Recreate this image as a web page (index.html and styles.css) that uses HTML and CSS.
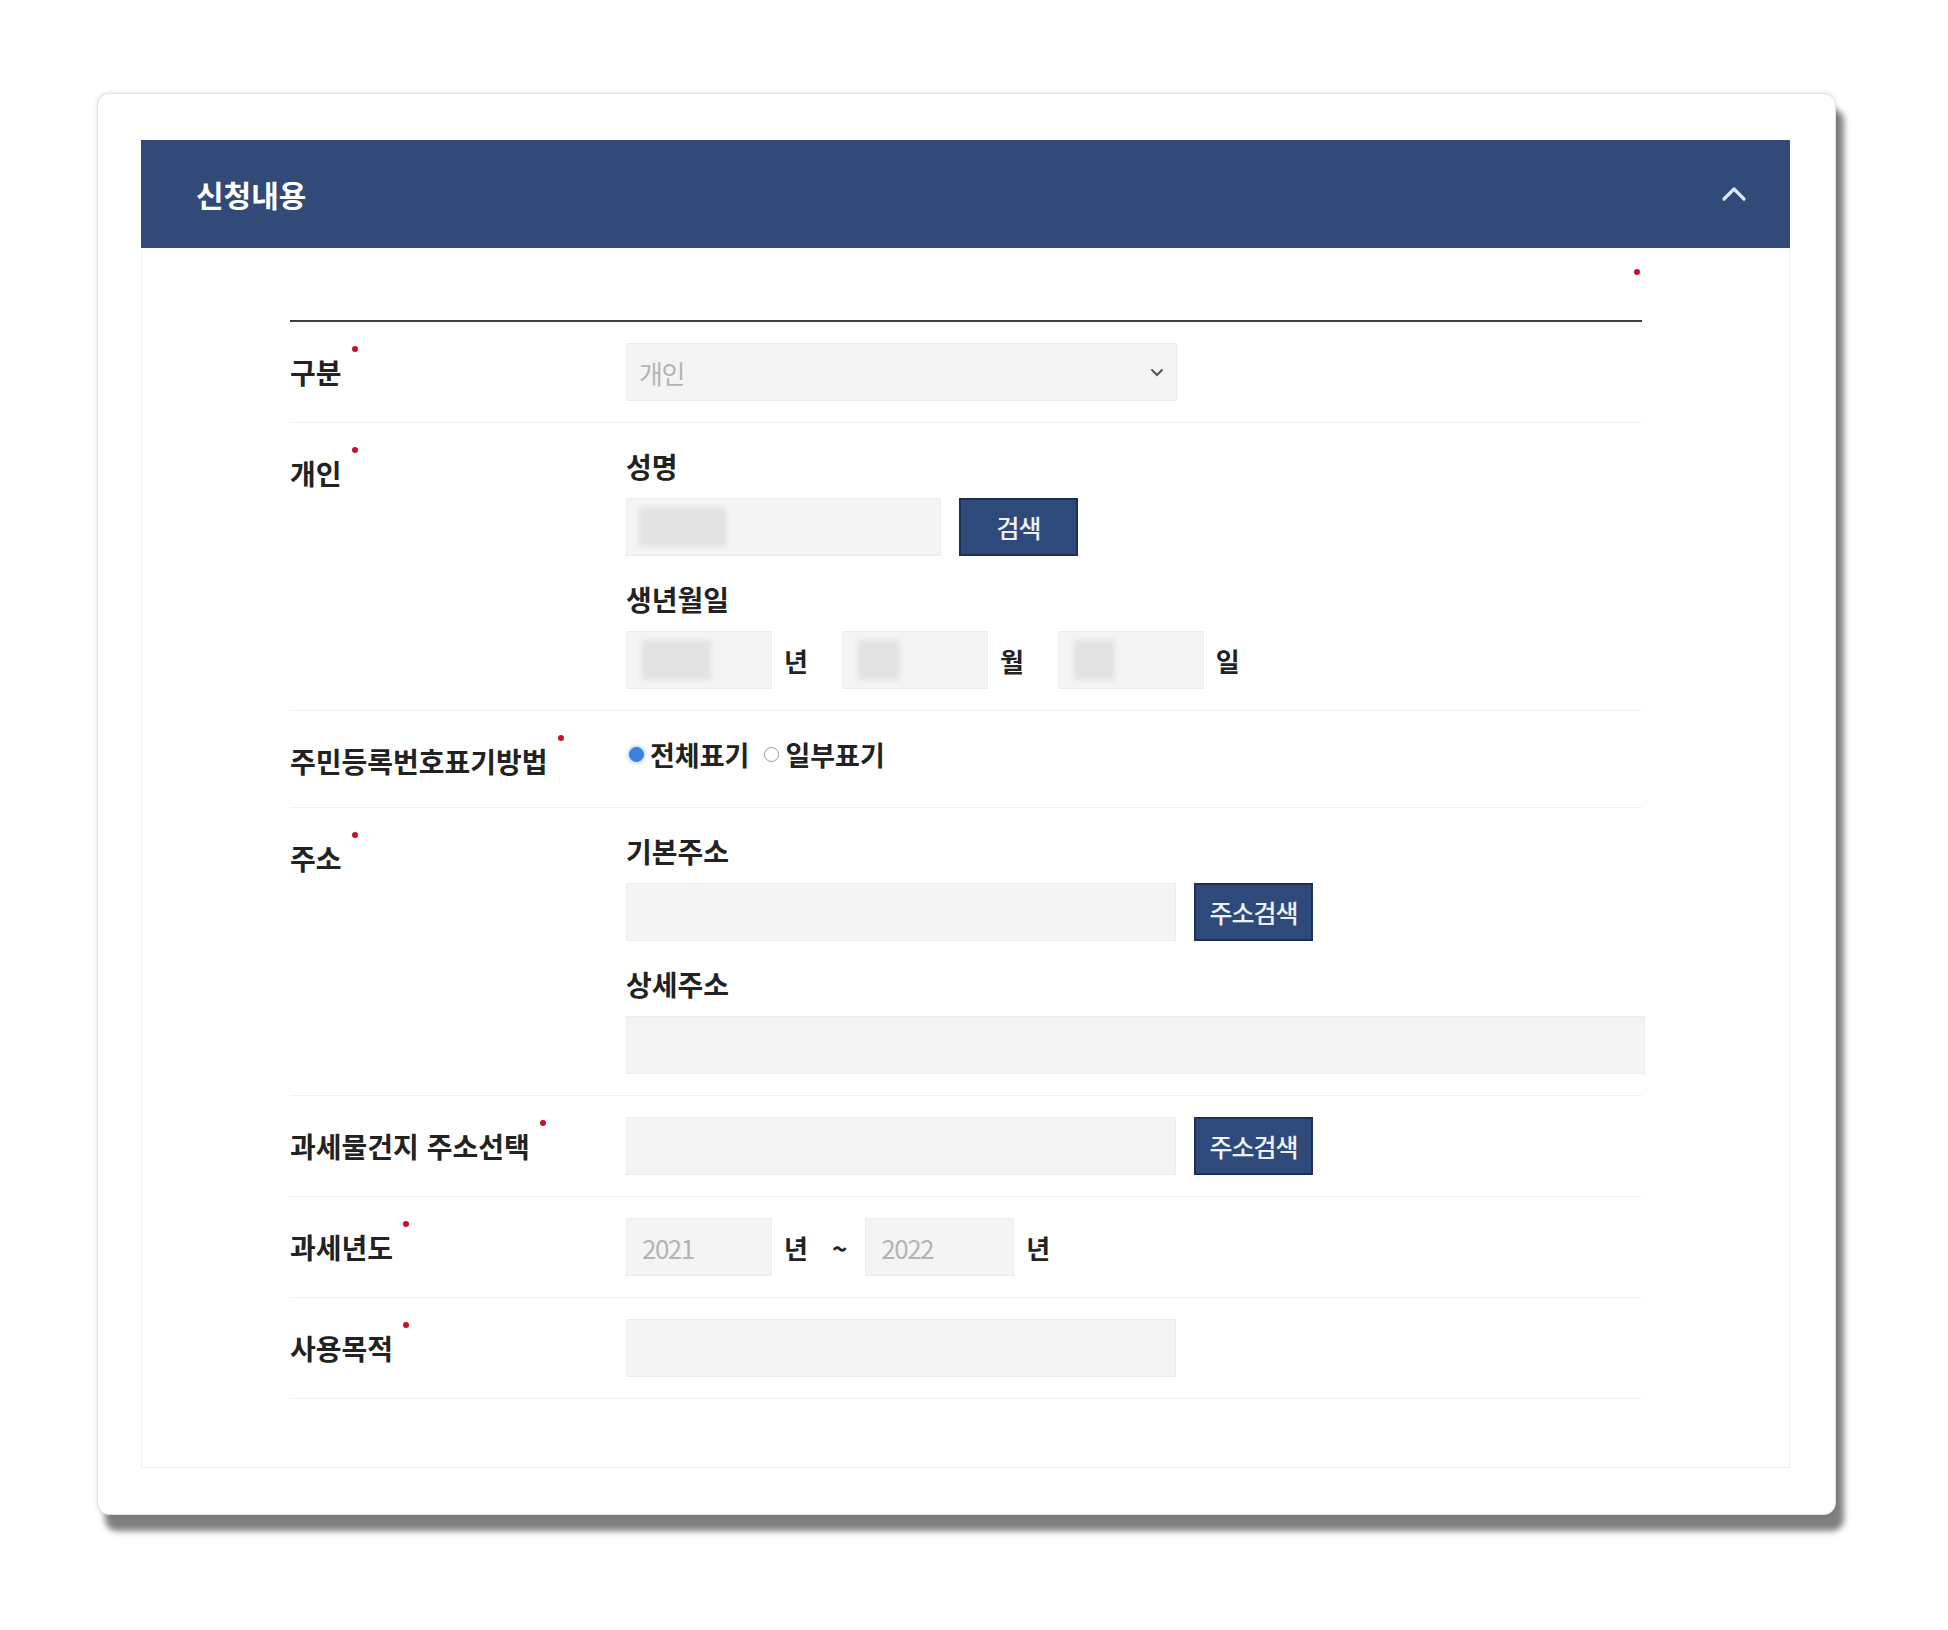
FILE: index.html
```html
<!DOCTYPE html>
<html lang="ko">
  <head>
    <meta charset="utf-8">
    <title>신청내용</title>
    <link rel="stylesheet" href="styles.css">
  </head>
  <body>
    <div class="card">
      <section class="panel">
        <div class="panel-head">
          <h2>신청내용</h2>
          <svg class="toggle" width="26" height="16" viewBox="0 0 26 16">
            <path d="M3 13 L13 3 L23 13" fill="none" stroke="#dfe6f3" stroke-width="3.2" stroke-linecap="round" stroke-linejoin="round"/>
          </svg>
        </div>

        <div class="panel-body">
          <div class="form-top"><span class="req"></span></div>

          <div class="row">
            <div class="label">구분<span class="req"></span></div>
            <div class="field">
              <div class="select">
                <span class="placeholder">개인</span>
                <svg width="14" height="10" viewBox="0 0 14 10">
                  <path d="M2 3 L7 8 L12 3" fill="none" stroke="#555" stroke-width="2" stroke-linecap="round"/>
                </svg>
              </div>
            </div>
          </div>

          <div class="row">
            <div class="label">개인<span class="req"></span></div>
            <div class="field">
              <div class="sub-label">성명</div>
              <div class="line">
                <div class="input w-name"><span class="blur" style="width: 87px"></span></div>
                <button class="button">검색</button>
              </div>
              <div class="sub-label second">생년월일</div>
              <div class="line dates">
                <div class="unit-group">
                  <div class="input w-date"><span class="blur" style="width: 69px"></span></div>
                  <span class="unit">년</span>
                </div>
                <div class="unit-group">
                  <div class="input w-date"><span class="blur" style="width: 42px"></span></div>
                  <span class="unit">월</span>
                </div>
                <div class="unit-group">
                  <div class="input w-date"><span class="blur" style="width: 41px"></span></div>
                  <span class="unit">일</span>
                </div>
              </div>
            </div>
          </div>

          <div class="row">
            <div class="label">주민등록번호표기방법<span class="req"></span></div>
            <div class="field radios">
              <label class="radio"><input type="radio" name="rrn" checked>전체표기</label>
              <label class="radio"><input type="radio" name="rrn">일부표기</label>
            </div>
          </div>

          <div class="row">
            <div class="label">주소<span class="req"></span></div>
            <div class="field">
              <div class="sub-label">기본주소</div>
              <div class="line">
                <div class="input w-mid"></div>
                <button class="button">주소검색</button>
              </div>
              <div class="sub-label second">상세주소</div>
              <div class="line">
                <div class="input w-full"></div>
              </div>
            </div>
          </div>

          <div class="row">
            <div class="label">과세물건지 주소선택<span class="req"></span></div>
            <div class="field">
              <div class="line">
                <div class="input w-mid"></div>
                <button class="button">주소검색</button>
              </div>
            </div>
          </div>

          <div class="row">
            <div class="label">과세년도<span class="req"></span></div>
            <div class="field">
              <div class="line years">
                <div class="input w-date"><span class="placeholder">2021</span></div>
                <span class="unit">년</span>
                <span class="tilde">~</span>
                <div class="input w-year"><span class="placeholder">2022</span></div>
                <span class="unit">년</span>
              </div>
            </div>
          </div>

          <div class="row">
            <div class="label">사용목적<span class="req"></span></div>
            <div class="field">
              <div class="input w-mid"></div>
            </div>
          </div>
        </div>
      </section>
    </div>
  </body>
</html>
```

FILE: styles.css
```css
body {
  margin: 0;
  padding: 93px 0 80px 97px;
  background: #fff;
  font-family: "Noto Sans CJK KR", "Noto Sans", sans-serif;
  color: #222;
}

.card {
  width: 1739px;
  box-sizing: border-box;
  padding: 46px 46px 46px 43px;
  background: #fff;
  border: 1px solid #e0e0e0;
  border-radius: 12px;
  box-shadow: 8px 16px 6px 0 rgba(0, 0, 0, 0.5), 0 0 5px rgba(0, 0, 0, 0.12);
}

.panel {
  width: 1649px;
}

.panel-head {
  height: 108px;
  background: #314a77;
  display: flex;
  align-items: center;
  justify-content: space-between;
  padding: 0 43px 0 55px;
}

.panel-head h2 {
  margin: 0;
  color: #fff;
  font-size: 30px;
  font-weight: 700;
}

.panel-body {
  border: 1px solid #efefef;
  border-top: none;
  padding: 0 147px 68px 148px;
}

.form-top {
  height: 74px;
  border-bottom: 2px solid #3a3d44;
  display: flex;
  justify-content: flex-end;
  align-items: flex-start;
  padding-right: 2px;
  box-sizing: border-box;
}

.form-top .req {
  margin: 21px 0 0;
  top: 0;
}

.req {
  display: inline-block;
  position: relative;
  top: -8px;
  width: 6px;
  height: 6px;
  border-radius: 50%;
  background: #c8102e;
  margin-left: 10px;
  vertical-align: top;
}

.row {
  display: grid;
  grid-template-columns: 336px 1fr;
  padding: 21px 0;
  border-bottom: 1px solid #f1f1f1;
}

.label {
  padding-top: 11px;
  font-size: 28px;
  line-height: 36px;
  font-weight: 700;
  white-space: nowrap;
}

.sub-label {
  margin: 4px 0 14px;
  font-size: 28px;
  line-height: 36px;
  font-weight: 700;
}

.sub-label.second {
  margin-top: 25px;
}

.line {
  display: flex;
  align-items: center;
  gap: 18px;
}

.input,
.select {
  height: 58px;
  box-sizing: border-box;
  background: #f4f4f4;
  border: 1px solid #ececec;
  display: flex;
  align-items: center;
  padding-left: 12px;
}

.select {
  width: 551px;
  justify-content: space-between;
  padding-right: 12px;
}

.w-name { width: 315px; }
.w-mid { width: 550px; }
.w-full { width: 1019px; }
.w-date { width: 146px; padding-left: 15px; }
.w-year { width: 149px; padding-left: 15px; }

.placeholder {
  color: #b4b4b4;
  font-size: 26px;
  letter-spacing: -1.5px;
}

.blur {
  display: block;
  height: 40px;
  background: #e3e3e3;
  filter: blur(2px);
}

.button {
  width: 119px;
  height: 58px;
  padding: 0;
  background: #2e4a7b;
  border: 2px solid #1d2f52;
  color: #eef1f7;
  font-family: inherit;
  font-size: 25px;
  font-weight: 500;
  letter-spacing: -1px;
  cursor: pointer;
}

.dates {
  gap: 34px;
}

.unit-group {
  display: flex;
  align-items: center;
  gap: 12px;
}

.unit {
  font-size: 26px;
  font-weight: 700;
}

.years {
  gap: 12px;
}

.tilde {
  margin: 0 6px 0 12px;
  font-size: 26px;
  font-weight: 700;
}

.radios {
  display: flex;
  align-items: flex-start;
  height: 54px;
  padding-top: 4px;
  box-sizing: border-box;
}

.radio {
  display: flex;
  align-items: center;
  height: 36px;
  font-size: 27px;
  font-weight: 700;
  margin-right: 12px;
}

.radio input {
  appearance: none;
  width: 15px;
  height: 15px;
  margin: 0 6px 0 3px;
  border: 1px solid #9a9a9a;
  border-radius: 50%;
  background: #fff;
}

.radio input:checked {
  border-color: #3b82e0;
  background: #3b82e0;
  box-shadow: 0 0 4px rgba(59, 130, 224, 0.7);
}
```
